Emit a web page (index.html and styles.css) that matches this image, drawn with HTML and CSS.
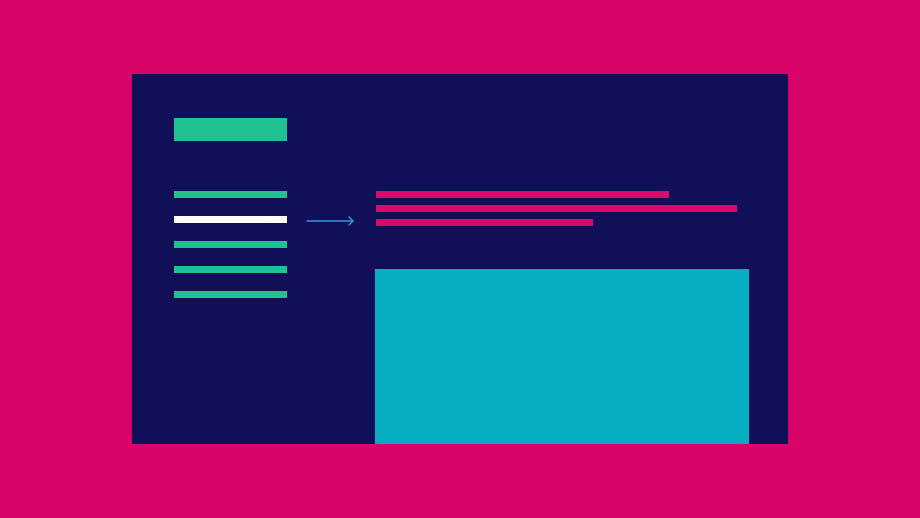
FILE: index.html
```html
<!DOCTYPE html>
<html lang="en">
<head>
<meta charset="utf-8">
<title>Layout</title>
<link rel="stylesheet" href="styles.css">
</head>
<body>
<div class="stage">
  <div class="panel">
    <aside class="sidebar">
      <div class="logo"></div>
      <nav class="nav">
        <div class="nav-item"></div>
        <div class="nav-item active"></div>
        <div class="nav-item"></div>
        <div class="nav-item"></div>
        <div class="nav-item"></div>
      </nav>
    </aside>
    <div class="arrow">
      <svg width="48" height="10" viewBox="0 0 48 10" fill="none" stroke="#2a9dd6" stroke-width="1.4" stroke-linecap="round" stroke-linejoin="round">
        <path d="M1 5H47"/>
        <path d="M43 1L47 5L43 9"/>
      </svg>
    </div>
    <main class="content">
      <div class="lines">
        <div class="line l1"></div>
        <div class="line l2"></div>
        <div class="line l3"></div>
      </div>
      <div class="media"></div>
    </main>
  </div>
</div>
</body>
</html>
```

FILE: styles.css
```css
html, body {
  margin: 0;
  padding: 0;
}
body {
  background: #d8046a;
  width: 920px;
  height: 518px;
  overflow: hidden;
}
.stage {
  padding: 74px 0 0 132px;
}
.panel {
  width: 656px;
  height: 370px;
  box-sizing: border-box;
  background: #110f58;
  padding: 44px 0 0 42px;
  display: flex;
  align-items: flex-start;
}
.sidebar {
  width: 113px;
  flex: none;
}
.logo {
  height: 23px;
  background: #22c192;
}
.nav {
  margin-top: 50px;
  display: flex;
  flex-direction: column;
  gap: 18px;
}
.nav-item {
  height: 7px;
  background: #22c192;
}
.nav-item.active {
  background: #ffffff;
}
.arrow {
  margin-left: 19px;
  margin-top: 98px;
  width: 48px;
  height: 10px;
  flex: none;
}
.arrow svg {
  display: block;
}
.content {
  margin-left: 22px;
  width: 374px;
  align-self: stretch;
  padding-top: 73px;
  display: flex;
  flex-direction: column;
}
.lines {
  display: flex;
  flex-direction: column;
  gap: 7px;
}
.line {
  height: 7px;
  background: #d80b6c;
}
.l1 { width: 293px; }
.l2 { width: 361px; }
.l3 { width: 217px; }
.media {
  margin-top: 43px;
  flex: 1;
  margin-left: -1px;
  margin-right: 1px;
  background: #07adc2;
}
```
